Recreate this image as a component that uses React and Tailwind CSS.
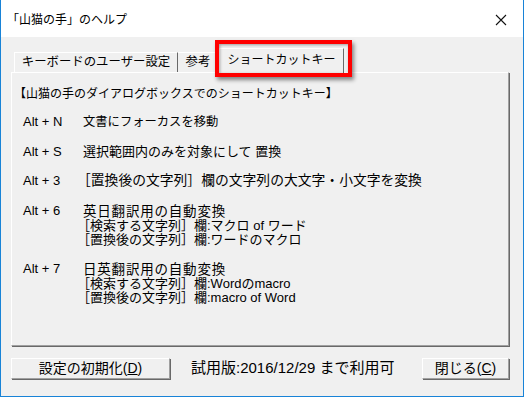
import React from "react";

const jp = { fontFamily: '"Liberation Sans", "Noto Sans CJK JP", sans-serif' };

const Row = ({ k, children, className }) => (
  <div className={"flex " + className}>
    <div className="w-[69px] pl-[9px] text-[13px] leading-[14px]">{k}</div>
    <div className="flex flex-col">{children}</div>
  </div>
);

export default function App() {
  return (
    <div
      className="relative w-[524px] h-[397px] bg-white border-l border-r border-b border-[#1883d7] text-black overflow-hidden"
      style={jp}
    >
      {/* title bar */}
      <div className="h-[37px] bg-white flex items-center justify-between pl-[6px] pr-[16px] pt-[3px]">
        <span className="text-[12px]">「山猫の手」のヘルプ</span>
        <svg width="12" height="12" viewBox="0 0 12 12" className="mb-[1px]">
          <path d="M1 1 L11 11 M11 1 L1 11" stroke="#111" strokeWidth="1.1" fill="none" />
        </svg>
      </div>

      {/* body */}
      <div className="h-[359px] bg-[#f0f0f0] pl-[10px] pr-[14px]">
        {/* tabs */}
        <div className="flex items-end pl-[3px] pt-[11px] h-[35px]">
          <div className="w-[164px] h-[20px] border-t border-l border-white border-r border-r-[#696969] flex items-center justify-center text-[12.4px]">
            キーボードのユーザー設定
          </div>
          <div className="w-[41px] h-[20px] border-t border-white border-r border-r-[#696969] flex items-center justify-center text-[12.4px]">
            参考
          </div>
          <div className="w-[125px] h-[25px] -mb-[1px] bg-[#f0f0f0] border-t border-l border-white border-r border-r-[#696969] flex items-center justify-center text-[12px] relative z-10 pb-[3px]">
            ショートカットキー
          </div>
        </div>

        {/* panel */}
        <div className="w-[498px] h-[274px] border-t border-l border-white border-r border-b border-r-[#a0a0a0] border-b-[#a0a0a0] shadow-[1px_1px_0_#696969] pt-[14px] pl-[2px]">
          <div className="text-[12px] leading-[14px]">【山猫の手のダイアログボックスでのショートカットキー】</div>
          <Row k="Alt + N" className="mt-[14px]">
            <span className="text-[12.3px] leading-[14px]">文書にフォーカスを移動</span>
          </Row>
          <Row k="Alt + S" className="mt-[16px]">
            <span className="text-[13px] leading-[14px]">選択範囲内のみを対象にして 置換</span>
          </Row>
          <Row k="Alt + 3" className="mt-[15px]">
            <span className="text-[13.8px] leading-[14px] -ml-[6px]">［置換後の文字列］欄の文字列の大文字・小文字を変換</span>
          </Row>
          <Row k="Alt + 6" className="mt-[16px]">
            <span className="text-[13.5px] leading-[15px] tracking-[0.8px]">英日翻訳用の自動変換</span>
            <span className="text-[13px] leading-[14px] -ml-[6px]">［検索する文字列］欄:マクロ of ワード</span>
            <span className="text-[13px] leading-[14px] -ml-[6px]">［置換後の文字列］欄:ワードのマクロ</span>
          </Row>
          <Row k="Alt + 7" className="mt-[15px]">
            <span className="text-[13.5px] leading-[15px] tracking-[0.8px]">日英翻訳用の自動変換</span>
            <span className="text-[13px] leading-[14px] -ml-[6px]">［検索する文字列］欄:Wordのmacro</span>
            <span className="text-[13px] leading-[14px] -ml-[6px]">［置換後の文字列］欄:macro of Word</span>
          </Row>
        </div>

        {/* footer */}
        <div className="flex items-center mt-[11px]">
          <div className="w-[159px] h-[21px] border-t border-l border-white border-r border-b border-r-[#a0a0a0] border-b-[#a0a0a0] shadow-[1px_1px_0_#696969] flex items-center justify-center text-[14px]">
            設定の初期化(<span className="underline">D</span>)
          </div>
          <div className="ml-[21px] text-[15px]">試用版:2016/12/29 まで利用可</div>
          <div className="ml-auto w-[87px] h-[21px] border-t border-l border-white border-r border-b border-r-[#a0a0a0] border-b-[#a0a0a0] shadow-[1px_1px_0_#696969] flex items-center justify-center text-[14px]">
            閉じる(<span className="underline">C</span>)
          </div>
        </div>
      </div>

      {/* red annotation box */}
      <div className="absolute left-[214px] top-[40px] w-[137px] h-[37px] border-[4px] border-[#ff0000] shadow-[2px_3px_4px_rgba(0,0,0,0.45),inset_1px_1px_3px_rgba(0,0,0,0.35)] z-20 pointer-events-none"></div>
    </div>
  );
}
